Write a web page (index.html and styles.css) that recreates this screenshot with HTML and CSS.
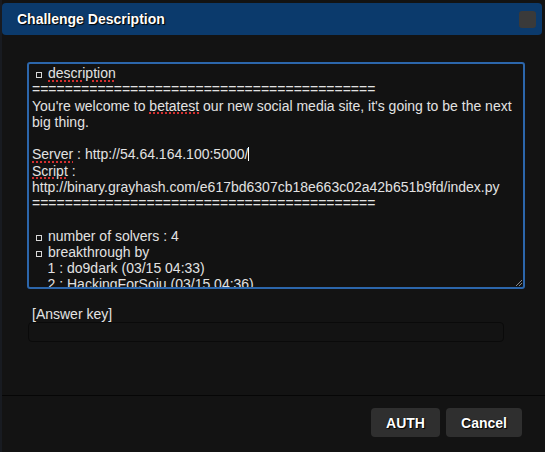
FILE: index.html
```html
<!DOCTYPE html>
<html>
<head>
<meta charset="utf-8">
<link rel="stylesheet" href="styles.css">
</head>
<body>
<div class="modal">
  <div class="modal-header">
    <h3 class="title">Challenge Description</h3>
    <span class="close"></span>
  </div>
  <div class="modal-body">
    <div class="textarea">
      <div class="line"><span class="box"></span><span class="spell">description</span></div>
      <div class="line">==========================================</div>
      <div class="line">You're welcome to <span class="spell">betatest</span> our new social media site, it's going to be the next</div>
      <div class="line">big thing.</div>
      <div class="line">&nbsp;</div>
      <div class="line"><span class="spell">Server</span> : http://54.64.164.100:5000/<span class="caret"></span></div>
      <div class="line"><span class="spell">Script</span> :</div>
      <div class="line">http://binary.grayhash.com/e617bd6307cb18e663c02a42b651b9fd/index.py</div>
      <div class="line">==========================================</div>
      <div class="line">&nbsp;</div>
      <div class="line"><span class="box"></span>number of solvers : 4</div>
      <div class="line"><span class="box"></span>breakthrough by</div>
      <div class="line">    1 : do9dark (03/15 04:33)</div>
      <div class="line">    2 : HackingForSoju (03/15 04:36)</div>
      <svg class="grip" width="7" height="7" viewBox="0 0 7 7"><path d="M1 7L7 1M4 7L7 4" stroke="#888" stroke-width="1"/></svg>
    </div>
    <label class="answer-label">[Answer key]</label>
    <div class="answer-input"></div>
  </div>
  <div class="modal-footer">
    <button class="btn">AUTH</button>
    <button class="btn">Cancel</button>
  </div>
</div>
</body>
</html>
```
FILE: styles.css
```css
html, body {
  margin: 0;
  padding: 0;
  background: #131313;
}
body {
  width: 545px;
  height: 452px;
  overflow: hidden;
  font-family: "Liberation Sans", Arial, sans-serif;
  font-size: 14px;
  color: #e0e0e0;
}
.modal {
  display: flex;
  flex-direction: column;
  height: 452px;
  border-left: 2px solid #181b21;
  box-sizing: border-box;
}
.modal-header {
  margin: 3px 3px 0 0;
  height: 32px;
  background: #0b3a6c;
  border-radius: 4px;
  display: flex;
  align-items: center;
  justify-content: space-between;
  padding: 0 6px 0 15px;
  box-sizing: border-box;
}
.title {
  margin: 0;
  font-size: 14px;
  font-weight: bold;
  color: #fff;
  text-shadow: 1px 1px 1px #000, 0 0 1px #000;
}
.close {
  width: 17px;
  height: 17px;
  background: #3a3a3a;
  border-radius: 3px;
}
.modal-body {
  padding: 27px 18px 0 25px;
  height: 360px;
  box-sizing: border-box;
}
.textarea {
  position: relative;
  width: 498px;
  height: 227px;
  box-sizing: border-box;
  border: 2px solid #2c66ab;
  border-radius: 3px;
  background: #121212;
  padding: 1px 3px;
  overflow: hidden;
}
.line {
  white-space: pre;
  line-height: 16.25px;
  height: 16.25px;
  color: #e2e2e2;
}
.box {
  display: inline-block;
  width: 6px;
  height: 6px;
  box-sizing: border-box;
  border: 1px solid #d8d8d8;
  margin: 0 6px 0 4px;
  vertical-align: 0px;
}
.spell {
  text-decoration: underline dotted #d43030;
  text-decoration-thickness: 2px;
  text-underline-offset: 2px;
}
.caret {
  display: inline-block;
  width: 1px;
  height: 14px;
  background: #fff;
  vertical-align: -2px;
}
.grip {
  position: absolute;
  right: 1px;
  bottom: 1px;
}
.answer-label {
  display: block;
  margin: 17px 0 0 5px;
  line-height: 16px;
  color: #e4e4e4;
}
.answer-input {
  margin: 0 0 0 1px;
  width: 476px;
  height: 20px;
  box-sizing: border-box;
  background: #131313;
  border: 1px solid #0a0a0a;
  border-radius: 4px;
}
.modal-footer {
  border-top: 1px solid #060606;
  display: flex;
  justify-content: flex-end;
  gap: 6px;
  padding: 12px 23px 0 0;
}
.btn {
  font-family: "Liberation Sans", Arial, sans-serif;
  font-size: 14px;
  font-weight: bold;
  color: #fff;
  text-shadow: 1px 1px 1px #000, 0 0 1px #000;
  background: #2f2f2f;
  border: none;
  border-radius: 4px;
  height: 29px;
  padding: 0;
}
.btn:first-child { width: 69px; }
.btn:last-child { width: 76px; }
```
